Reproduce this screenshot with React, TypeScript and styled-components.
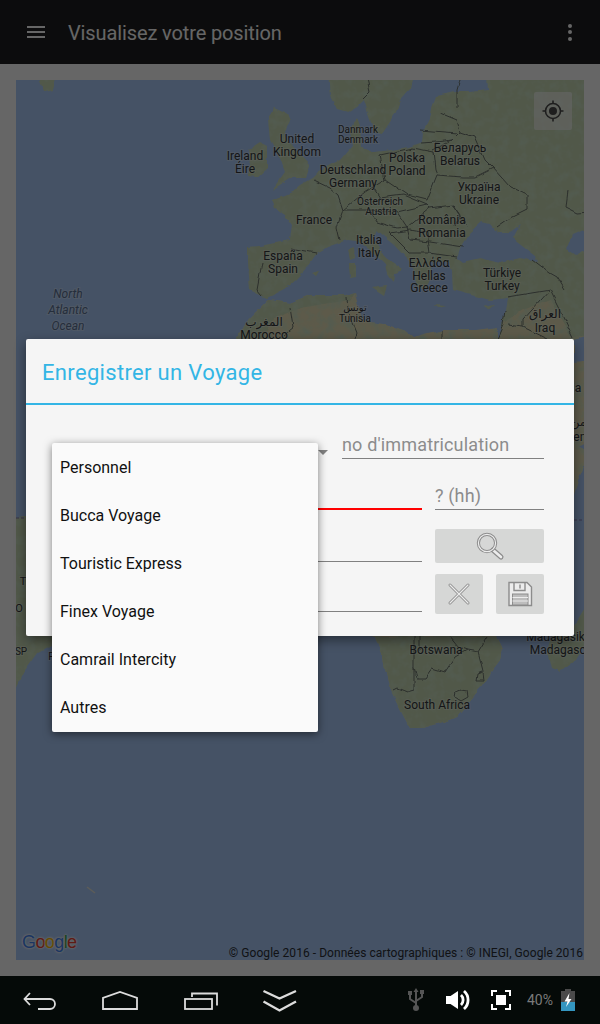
import { createGlobalStyle, styled } from "styled-components";

const GlobalStyle = createGlobalStyle`
    html, body {
        margin: 0;
        padding: 0;
        background: #000;
    }
    body {
        font-family: Roboto, "DejaVu Sans", sans-serif;
    }
`

const Screen = styled.div`
    display: flex;
    flex-direction: column;
    width: 600px;
    height: 1024px;
    overflow: hidden;
`

const Activity = styled.div`
    position: relative;
    display: flex;
    flex-direction: column;
    flex: 1;
    background: #fff;
`

const TopBar = styled.header`
    display: flex;
    align-items: center;
    height: 64px;
    padding: 0 28px 0 27px;
    background: #1f1f21;
    color: #fff;
    box-sizing: border-box;
    flex-shrink: 0;
`

const Burger = styled.div`
    display: flex;
    flex-direction: column;
    gap: 3px;
    width: 18px;
    margin-right: 23px;

    span {
        display: block;
        height: 2px;
        background: #fff;
    }
`

const Title = styled.h1`
    flex: 1;
    margin: 0;
    padding-top: 2px;
    font-size: 20px;
    font-weight: 400;
    letter-spacing: -0.12px;
`

const Dots = styled.div`
    display: flex;
    flex-direction: column;
    gap: 2.5px;

    span {
        display: block;
        width: 4px;
        height: 4px;
        border-radius: 50%;
        background: #fff;
    }
`

const Content = styled.main`
    flex: 1;
    padding: 16px;
`

const MapFrame = styled.div`
    position: relative;
    width: 568px;
    height: 880px;
    overflow: hidden;
`

const MapCanvas = styled.svg`
    display: block;
    background: #accdfc;
`

const MapLabel = styled.text<{ $size: number; $italic?: boolean }>`
    font-family: Roboto, "DejaVu Sans", sans-serif;
    font-size: ${props => props.$size}px;
    font-style: ${props => props.$italic ? "italic" : "normal"};
    fill: ${props => props.$italic ? "#5d7396" : "#35393c"};
    text-anchor: middle;
    dominant-baseline: central;
    paint-order: stroke;
    stroke: rgba(255, 255, 255, 0.3);
    stroke-width: 2px;
`

const LocateButton = styled.div`
    position: absolute;
    top: 12px;
    right: 12px;
    display: flex;
    align-items: center;
    justify-content: center;
    width: 38px;
    height: 38px;
    border-radius: 2px;
    background: rgba(255, 255, 255, 0.6);
`

const GoogleLogo = styled.div`
    position: absolute;
    left: 6px;
    bottom: 7px;
    font-family: "Liberation Sans", sans-serif;
    font-size: 18px;
    letter-spacing: -0.6px;
    text-shadow: 0 0 2px #fff, 0 0 2px #fff, 0 0 3px #fff;
`

const LogoLetter = styled.span<{ $color: string }>`
    color: ${props => props.$color};
`

const Attribution = styled.div`
    position: absolute;
    right: 1px;
    bottom: -1px;
    font-size: 12px;
    line-height: 16px;
    letter-spacing: 0.05px;
    white-space: nowrap;
    color: #2b2f36;
`

const Scrim = styled.div`
    position: absolute;
    inset: 0;
    display: flex;
    align-items: center;
    justify-content: center;
    padding-bottom: 1px;
    background: rgba(0, 0, 0, 0.6);
`

const Dialog = styled.section`
    position: relative;
    width: 548px;
    height: 297px;
    border-radius: 2px;
    background: #f5f5f5;
    box-shadow: 0 4px 12px rgba(0, 0, 0, 0.45);
`

const DialogTitle = styled.h2`
    display: flex;
    align-items: center;
    height: 62px;
    margin: 0;
    padding: 2px 0 0 16px;
    font-size: 22px;
    font-weight: 400;
    letter-spacing: 0.33px;
    color: #33b5e5;
    border-bottom: 2px solid #33b5e5;
`

const Form = styled.div`
    display: grid;
    grid-template-columns: 370px 109px;
    grid-template-rows: 34px 52px 52px 51px;
    column-gap: 13px;
    padding: 20px 30px 0 26px;
`

const SpinnerRow = styled.div`
    grid-column: 1 / 3;
    display: flex;
    justify-content: flex-end;
    align-items: flex-end;
`

const SpinnerArrow = styled.div`
    width: 0;
    height: 0;
    margin: 0 14px 4px 0;
    border-left: 5px solid transparent;
    border-right: 5px solid transparent;
    border-top: 5px solid #808080;
`

const Field = styled.div<{ $width?: number; $invalid?: boolean; $inset?: number }>`
    display: flex;
    align-items: center;
    width: ${props => props.$width ? `${props.$width}px` : "auto"};
    height: 24px;
    padding-bottom: 2px;
    align-self: end;
    margin-bottom: ${props => props.$inset ?? 1}px;
    font-size: 18px;
    letter-spacing: 0.16px;
    color: #8c8c8c;
    border-bottom: ${props => props.$invalid ? "2px solid #f00" : "1px solid #808080"};
`

const SearchButton = styled.button`
    display: flex;
    align-items: center;
    justify-content: center;
    align-self: start;
    height: 34px;
    margin-top: 18px;
    padding: 0;
    border: none;
    border-radius: 2px;
    background: #d6d7d6;
`

const ActionCell = styled.div`
    display: flex;
    justify-content: space-between;
    margin-top: 11px;
`

const ActionButton = styled.button`
    display: flex;
    align-items: center;
    justify-content: center;
    width: 48px;
    height: 40px;
    padding: 0;
    border: none;
    border-radius: 2px;
    background: #d6d7d6;
`

const Dropdown = styled.ul`
    position: absolute;
    top: 104px;
    left: 26px;
    width: 266px;
    margin: 0;
    padding: 0 0 1px;
    list-style: none;
    border-radius: 2px;
    background: #fafafa;
    box-shadow: 0 2px 8px rgba(0, 0, 0, 0.5);
`

const DropdownItem = styled.li`
    display: flex;
    align-items: center;
    height: 48px;
    padding-left: 8px;
    font-size: 16px;
    color: #111;
`

const NavBar = styled.nav`
    display: flex;
    align-items: center;
    justify-content: space-between;
    height: 48px;
    padding: 0 25px 0 22px;
    background: #050a08;
    flex-shrink: 0;
`

const NavButtons = styled.div`
    display: flex;
    gap: 44px;

    svg {
        display: block;
    }
`

const Tray = styled.div`
    display: flex;
    align-items: center;
    gap: 21px;
`

const BatteryGroup = styled.div`
    display: flex;
    align-items: center;
    gap: 8px;
    margin-left: -5px;
`

const BatteryText = styled.span`
    font-size: 14px;
    color: #7a7a7a;
`

const labels: [string, number, number, number][] = [
    ["Ireland", 245, 156, 12], ["Éire", 245, 169, 12],
    ["United", 297, 139, 12], ["Kingdom", 297, 152, 12],
    ["Danmark", 358, 129, 10], ["Denmark", 358, 139, 10],
    ["Deutschland", 353, 170, 12], ["Germany", 353, 183, 12],
    ["Polska", 407, 158, 12], ["Poland", 407, 171, 12],
    ["Беларусь", 460, 148, 12], ["Belarus", 460, 161, 12],
    ["Україна", 479, 187, 12], ["Ukraine", 479, 200, 12],
    ["Österreich", 380, 201, 10], ["Austria", 381, 211, 10],
    ["France", 314, 220, 12],
    ["România", 442, 220, 12], ["Romania", 442, 233, 12],
    ["Italia", 369, 240, 12], ["Italy", 369, 253, 12],
    ["España", 283, 256, 12], ["Spain", 283, 269, 12],
    ["Ελλάδα", 429, 263, 12], ["Hellas", 429, 276, 12], ["Greece", 429, 288, 12],
    ["Türkiye", 502, 273, 12], ["Turkey", 502, 286, 12],
    ["تونس", 355, 307, 10], ["Tunisia", 355, 318, 10],
    ["المغرب", 264, 322, 12], ["Morocco", 264, 335, 12],
    ["العراق", 545, 314, 12], ["Iraq", 545, 328, 12],
    ["Arabia", 564, 388, 12], ["اليمن", 584, 422, 12], ["Yemen", 568, 437, 12],
    ["T", 23, 581, 11], ["O", 19, 608, 11], ["SP", 21, 651, 10], ["F", 51, 656, 10],
    ["Botswana", 436, 650, 12], ["South Africa", 437, 705, 12],
    ["Madagasikara", 564, 637, 12], ["Madagascar", 563, 650, 12],
]

const oceanLabels: [string, number, number][] = [
    ["North", 68, 294], ["Atlantic", 68, 310], ["Ocean", 68, 326],
]

const borders = [
    "M365,70 L370,92 L362,100",
    "M313,180 L330,188 L338,195 L343,210 L337,227 L340,240",
    "M380,155 L385,180 L373,187 L380,198 L403,195 L427,205 L430,208",
    "M373,187 L365,192 L343,210 L370,210 L397,212 L427,205",
    "M380,155 L412,148 L433,152 L435,170 L437,175 L427,200 L407,195 L385,180",
    "M437,175 L463,177 L475,177 L493,168 L485,160 L475,137 L460,132 L452,140 L432,150",
    "M420,130 L457,133 M420,143 L437,142 L452,140 M440,113 L457,120 L460,132 M457,107 L457,90 L463,70",
    "M493,168 L510,187 L527,195 L527,210 L507,220 L497,227",
    "M430,208 L453,205 L467,227 M453,205 L460,215 L455,226",
    "M397,212 L407,227 L430,208 M370,210 L377,222 L397,228 L407,227",
    "M290,248 L317,253 M262,263 L257,290 L262,296",
    "M390,233 L410,230 L427,233 L430,253 L410,253 L390,233",
    "M430,242 L463,247 M430,253 L457,257 M407,227 L410,240 L430,242",
    "M533,260 L550,273 L557,277 L565,290 M507,297 L550,290 L560,310 L573,337",
    "M523,320 L550,290 M523,327 L507,325 M523,320 L523,327 L550,340",
    "M290,307 L293,327 L283,335 M347,297 L348,310 L357,333 L355,339",
    "M442,330 L442,339 M505,310 L503,325 L497,339",
    "M567,190 L565,207 L577,213 L590,212",
    "M414,637 L414,690 L407,692 L397,688 L393,690",
    "M414,667 L417,678 L425,678 L432,668 L445,672 L455,657 L467,650 L478,652 L483,672",
    "M420,637 L420,650 M450,637 L458,647 L467,650 M478,652 L487,637",
    "M477,674 L482,672 L483,680 L476,680 Z",
    "M461,690 L467,691 L468,697 L461,701 L455,697 L456,692 Z",
]

const LAND = "#cbdcb6"
const DESERT = "#e8e2b8"
const SEA = "#accdfc"

function MapDrawing() {
    return (
        <MapCanvas width="568" height="880" viewBox="16 80 568 880">
            <defs>
                <filter id="rough" filterUnits="userSpaceOnUse" x="16" y="80" width="568" height="880">
                    <feTurbulence type="fractalNoise" baseFrequency="0.07" numOctaves="3" seed="4" result="noise" />
                    <feDisplacementMap in="SourceGraphic" in2="noise" scale="5" xChannelSelector="R" yChannelSelector="G" />
                    <feGaussianBlur stdDeviation="0.35" />
                </filter>
                <filter id="mottled" filterUnits="userSpaceOnUse" x="16" y="80" width="568" height="880">
                    <feTurbulence type="fractalNoise" baseFrequency="0.07" numOctaves="3" seed="4" result="noise" />
                    <feDisplacementMap in="SourceGraphic" in2="noise" scale="5" xChannelSelector="R" yChannelSelector="G" />
                    <feGaussianBlur stdDeviation="0.35" result="land" />
                    <feTurbulence type="fractalNoise" baseFrequency="0.11" numOctaves="3" seed="9" />
                    <feColorMatrix values="0 0 0 0 0.62  0 0 0 0 0.78  0 0 0 0 0.58  0 0 0 2.2 -0.9" />
                    <feComposite in2="land" operator="in" result="tint" />
                    <feMerge>
                        <feMergeNode in="land" />
                        <feMergeNode in="tint" />
                    </feMerge>
                </filter>
            </defs>
            <g filter="url(#mottled)">
                <g fill={LAND}>
                    <path d="M36,70 L57,70 L52,90 L44,92 Z" />
                    <path d="M328,70 L330,96 L337,109 L348,112 L358,106 L364,100 L368,113 L374,132 L382,134 L390,122 L396,112 L400,100 L411,88 L415,70 Z" />
                    <path d="M275,107 L286,112 L290,122 L283,134 L296,150 L310,165 L306,178 L290,178 L272,190 L285,172 L280,158 L270,140 L268,118 Z" />
                    <path d="M260,142 L268,146 L268,168 L258,177 L247,176 L250,160 L248,150 Z" />
                    <path d="M595,70 L487,70 L488,90 L470,92 L456,92 L436,96 L432,108 L430,118 L423,132 L422,142 L408,147 L392,150 L375,152 L362,147 L360,130 L356,118 L350,130 L352,146 L340,160 L330,165 L318,172 L312,178 L300,185 L292,192 L285,195 L272,200 L275,208 L285,215 L292,225 L290,240 L260,246 L248,247 L248,262 L250,290 L262,296 L267,298 L283,290 L295,280 L307,267 L317,253 L327,247 L347,240 L358,241 L370,250 L385,265 L387,273 L393,283 L394,273 L403,270 L385,257 L373,237 L377,230 L395,245 L412,263 L417,287 L425,291 L432,275 L430,262 L450,263 L452,272 L453,290 L490,300 L507,298 L505,310 L503,322 L497,339 L595,339 Z" />
                    <path d="M348,250 L354,248 L355,258 L350,260 Z" />
                    <path d="M349,263 L356,263 L356,277 L350,278 Z" />
                    <path d="M372,287 L387,285 L384,295 Z" />
                    <path d="M433,304 L447,305 L440,307 Z" />
                    <path d="M484,306 L494,304 L488,309 Z" />
                    <path d="M312,273 L320,271 L317,276 Z" />
                </g>
                <path
                    fill={DESERT}
                    d="M268,300 L250,318 L236,339 L200,420 L180,500 L230,560 L375,637 L383,657 L388,683 L402,713 L410,728 L423,728 L457,717 L477,693 L487,677 L500,660 L502,647 L497,637 L520,580 L574,495 L578,480 L590,453 L520,420 L497,339 L497,327 L477,330 L443,330 L413,338 L403,330 L383,323 L363,320 L358,307 L355,292 L347,295 L310,295 L290,303 Z"
                />
                <path
                    fill={LAND}
                    d="M268,300 L250,318 L236,339 L260,339 L275,318 L300,308 L350,300 L355,292 L347,295 L310,295 L290,303 Z M375,637 L383,657 L388,683 L402,713 L410,728 L423,728 L457,717 L477,693 L487,677 L500,660 L502,647 L497,637 Z"
                />
                <path fill={DESERT} d="M497,339 L505,322 L523,310 L550,300 L570,335 L595,339 L595,440 L574,450 L540,440 Z" />
                <path fill={LAND} d="M6,518 L26,516 L60,520 L60,640 L38,652 L23,673 L10,700 L6,700 Z" />
                <path fill={LAND} d="M595,590 L595,625 L575,660 L560,671 L552,668 L548,650 L552,636 L574,625 Z" />
            </g>
            <g filter="url(#rough)">
                <path fill={SEA} d="M574,340 L595,335 L595,360 L574,362 Z" />
                <path fill={SEA} d="M457,258 L461,247 L470,233 L482,222 L490,224 L497,232 L510,232 L520,225 L513,238 L535,255 L538,262 L520,258 L500,263 L480,258 L462,262 Z" />
                <path fill={SEA} d="M595,225 L572,235 L566,250 L575,256 L595,245 Z" />
                <path d={borders.join(" ")} fill="none" stroke="#6e766f" strokeWidth="1" />
            </g>
            <path d="M16,518 L26,518" stroke="#8a7fb0" strokeWidth="1" strokeDasharray="3 2" />
            <path d="M574,520 L584,520" stroke="#8a7fb0" strokeWidth="1" strokeDasharray="3 2" />
            <path d="M87,887 L95,893" stroke="#e6e6dc" strokeWidth="1.5" />
            {oceanLabels.map(([text, x, y]) => (
                <MapLabel key={text} x={x} y={y} $size={12} $italic>{text}</MapLabel>
            ))}
            {labels.map(([text, x, y, size]) => (
                <MapLabel key={text} x={x} y={y} $size={size}>{text}</MapLabel>
            ))}
        </MapCanvas>
    )
}

function LocateIcon() {
    return (
        <svg width="24" height="24" viewBox="0 0 24 24">
            <circle cx="12" cy="12" r="7.5" fill="none" stroke="#4c4c4c" strokeWidth="1.6" />
            <circle cx="12" cy="12" r="4" fill="#4c4c4c" />
            <path d="M12 1.5v3M12 19.5v3M1.5 12h3M19.5 12h3" stroke="#4c4c4c" strokeWidth="1.6" />
        </svg>
    )
}

function SearchIcon() {
    return (
        <svg width="30" height="30" viewBox="0 0 30 30">
            <g fill="none" strokeLinecap="round">
                <path d="M18 19l8 7" stroke="#8c8c8c" strokeWidth="5" />
                <path d="M18 19l8 7" stroke="#ececec" strokeWidth="2.6" />
                <circle cx="12" cy="12" r="8.6" stroke="#8c8c8c" strokeWidth="3.2" />
                <circle cx="12" cy="12" r="8.6" stroke="#ececec" strokeWidth="1.2" />
            </g>
        </svg>
    )
}

function CloseIcon() {
    return (
        <svg width="24" height="24" viewBox="0 0 24 24">
            <g strokeLinecap="round">
                <path d="M3 3l18 18M21 3L3 21" stroke="#8c8c8c" strokeWidth="3" />
                <path d="M3 3l18 18M21 3L3 21" stroke="#ececec" strokeWidth="1.2" />
            </g>
        </svg>
    )
}

function SaveIcon() {
    return (
        <svg width="26" height="26" viewBox="0 0 26 26">
            <path d="M2 1.5h18l4.5 4.5v18.5H2Z" fill="#ececec" stroke="#8c8c8c" strokeWidth="1.4" />
            <path d="M7 1.500v8h11v-8M13 3.500v4" fill="none" stroke="#8c8c8c" strokeWidth="1.4" />
            <rect x="5.500" y="13" width="15.500" height="11" fill="#bdbdbd" stroke="#8c8c8c" />
            <path d="M5.500 16.500h15.500M5.500 20h15.500" stroke="#ececec" strokeWidth="1.2" />
        </svg>
    )
}

function BackIcon() {
    return (
        <svg width="36" height="24" viewBox="0 0 36 24" fill="none" stroke="#dcdcdc" strokeWidth="1.8">
            <path d="M8 5L2.500 11l5.500 6M2.500 11H28a5 5 0 0 1 0 10H16" />
        </svg>
    )
}

function HomeIcon() {
    return (
        <svg width="36" height="24" viewBox="0 0 36 24" fill="none" stroke="#dcdcdc" strokeWidth="1.8">
            <path d="M1 21V10L18 4l17 6v11Z" />
        </svg>
    )
}

function RecentsIcon() {
    return (
        <svg width="36" height="24" viewBox="0 0 36 24" fill="none" stroke="#dcdcdc" strokeWidth="1.8">
            <rect x="3" y="11" width="27" height="10" />
            <path d="M10 9V5.500h25v12" />
        </svg>
    )
}

function HideIcon() {
    return (
        <svg width="36" height="24" viewBox="0 0 36 24" fill="none" stroke="#dcdcdc" strokeWidth="2.4">
            <path d="M1.500 3L17.500 10.500L34 3M1.500 13.500L17.500 22.500L34 13.500" />
        </svg>
    )
}

function UsbIcon() {
    return (
        <svg width="18" height="24" viewBox="0 0 18 24">
            <g fill="#555" stroke="#555" strokeWidth="2">
                <path d="M9 3v16" />
                <path d="M3 6v5l6 4M15 5v4l-6 4" fill="none" />
            </g>
            <circle cx="9" cy="20" r="3" fill="#555" />
            <path d="M9 0l2.500 4h-5Z" fill="#555" />
            <rect x="1" y="3" width="4" height="4" fill="#555" />
            <rect x="13" y="2" width="4" height="4" fill="#555" />
        </svg>
    )
}

function VolumeIcon() {
    return (
        <svg width="24" height="24" viewBox="0 0 24 24">
            <path d="M0 8h4.500L12 3v18l-7.500-5H0Z" fill="#fff" />
            <path d="M15 7a7 7 0 0 1 0 10M18 3a12 12 0 0 1 0 18" fill="none" stroke="#fff" strokeWidth="2.800" />
        </svg>
    )
}

function FullscreenIcon() {
    return (
        <svg width="20" height="20" viewBox="0 0 20 20">
            <path d="M1 6V1h5M14 1h5v5M19 14v5h-5M6 19H1v-5" fill="none" stroke="#fff" strokeWidth="2" />
            <rect x="5" y="5" width="10" height="10" fill="#fff" />
        </svg>
    )
}

function BatteryIcon() {
    return (
        <svg width="14" height="22" viewBox="0 0 14 22">
            <path d="M4 0h6v2h4v20H0V2h4Z" fill="#4a4a4a" />
            <rect x="0" y="13" width="14" height="9" fill="#3496c0" />
            <path d="M8.500 4L3.500 12.500h3L5 18l5.500-8h-3Z" fill="#fff" />
        </svg>
    )
}

const companies = ["Personnel", "Bucca Voyage", "Touristic Express", "Finex Voyage", "Camrail Intercity", "Autres"]

export default function App() {
    return (
        <Screen>
            <GlobalStyle />
            <Activity>
                <TopBar>
                    <Burger><span /><span /><span /></Burger>
                    <Title>Visualisez votre position</Title>
                    <Dots><span /><span /><span /></Dots>
                </TopBar>

                <Content>
                    <MapFrame>
                        <MapDrawing />
                        <LocateButton><LocateIcon /></LocateButton>
                        <GoogleLogo>
                            <LogoLetter $color="#4285f4">G</LogoLetter>
                            <LogoLetter $color="#ea4335">o</LogoLetter>
                            <LogoLetter $color="#fbbc05">o</LogoLetter>
                            <LogoLetter $color="#4285f4">g</LogoLetter>
                            <LogoLetter $color="#34a853">l</LogoLetter>
                            <LogoLetter $color="#ea4335">e</LogoLetter>
                        </GoogleLogo>
                        <Attribution>© Google 2016 - Données cartographiques : © INEGI, Google 2016</Attribution>
                    </MapFrame>
                </Content>

                <Scrim>
                    <Dialog>
                        <DialogTitle>Enregistrer un Voyage</DialogTitle>
                        <Form>
                            <SpinnerRow>
                                <SpinnerArrow />
                                <Field $width={202} $inset={0}>no d'immatriculation</Field>
                            </SpinnerRow>
                            <Field $invalid />
                            <Field>? (hh)</Field>
                            <Field />
                            <SearchButton><SearchIcon /></SearchButton>
                            <Field $inset={2} />
                            <ActionCell>
                                <ActionButton><CloseIcon /></ActionButton>
                                <ActionButton><SaveIcon /></ActionButton>
                            </ActionCell>
                        </Form>
                        <Dropdown>
                            {companies.map(name => (
                                <DropdownItem key={name}>{name}</DropdownItem>
                            ))}
                        </Dropdown>
                    </Dialog>
                </Scrim>
            </Activity>

            <NavBar>
                <NavButtons>
                    <BackIcon />
                    <HomeIcon />
                    <RecentsIcon />
                    <HideIcon />
                </NavButtons>
                <Tray>
                    <UsbIcon />
                    <VolumeIcon />
                    <FullscreenIcon />
                    <BatteryGroup>
                        <BatteryText>40%</BatteryText>
                        <BatteryIcon />
                    </BatteryGroup>
                </Tray>
            </NavBar>
        </Screen>
    )
}
